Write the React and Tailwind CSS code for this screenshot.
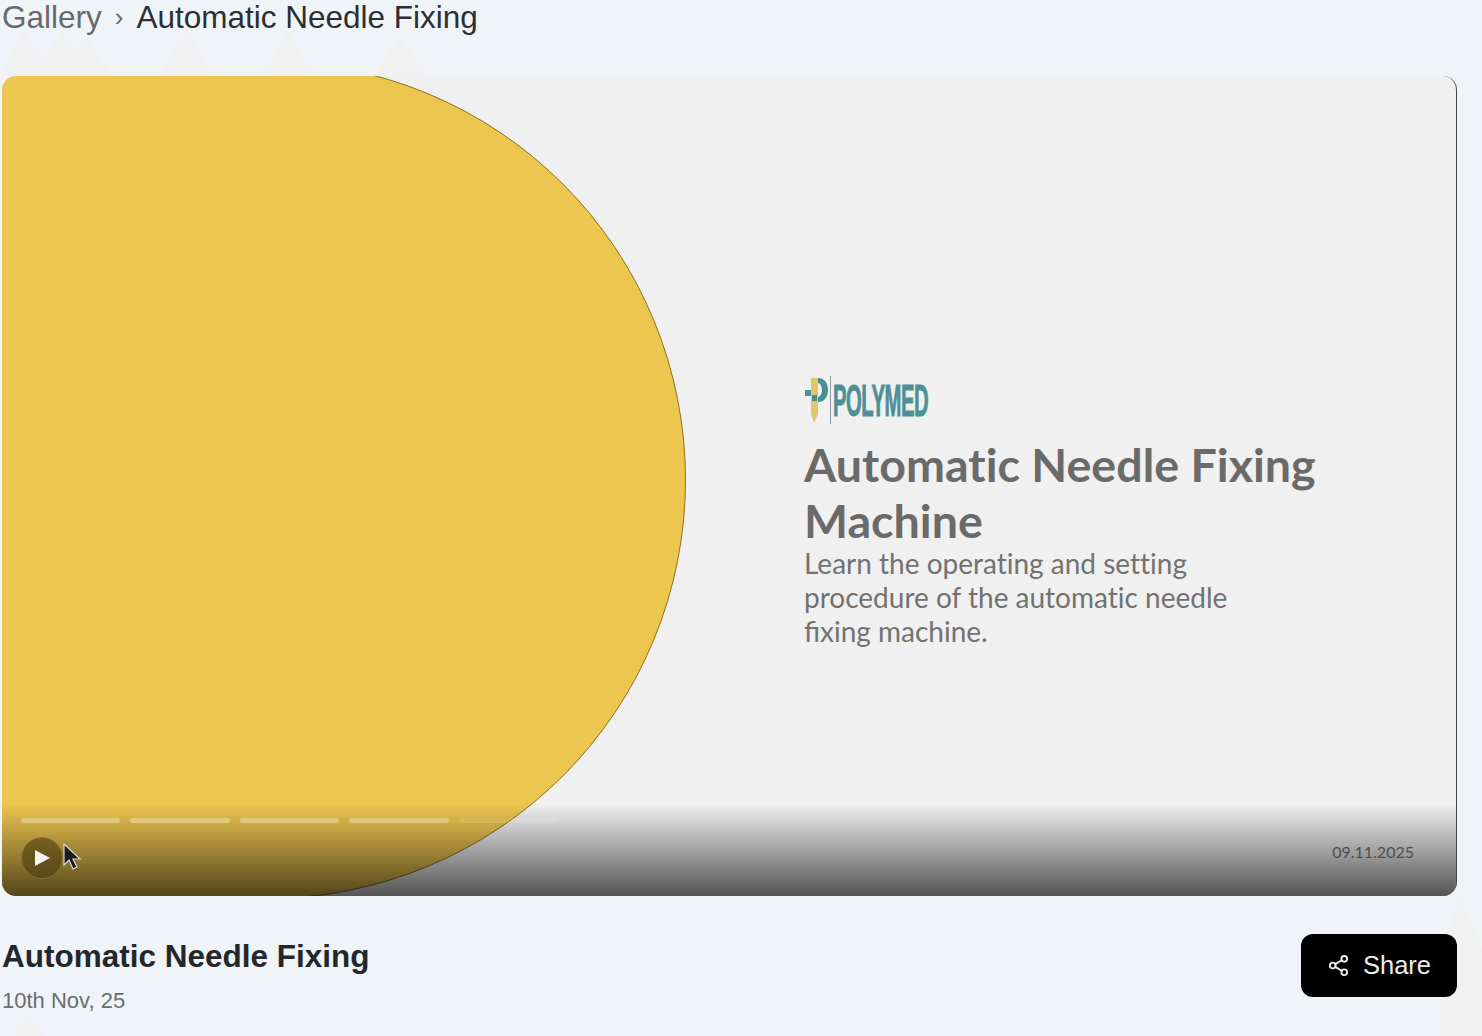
import React from 'react';
import { Share2 } from 'lucide-react';

const SEGMENTS = [1, 1, 1, 1, 0.35, 0.12, 0.12, 0.12, 0.12, 0.12, 0.12, 0.12, 0.12];
const PEAKS = [[25, 30], [62, 30], [85, 35], [187, 28], [288, 30], [400, 36]];

function Backdrop() {
  return (
    <svg className="absolute inset-0 pointer-events-none" width="1482" height="1036" fill="#f1f1f1">
      {PEAKS.map(([x, y]) => (
        <polygon key={x} points={`${x},${y} ${x + 27},76 ${x - 27},76`} />
      ))}
      <polygon points="1461,896 1482,950 1482,1036 1440,1036 1440,950" />
      <polygon points="30,1018 45,1036 15,1036" />
    </svg>
  );
}

function PolymedLogo() {
  return (
    <div className="flex items-center h-[50px]">
      <svg width="24" height="50" viewBox="0 0 24 50">
        <path d="M6 3h7v36l-4 9-3-9z" fill="#e3c56b" />
        <path d="M13 3c7 0 10 6 10 12s-3 12-10 12v-5c2 0 4-3 4-7s-2-7-4-7z" fill="#4a8e96" />
        <path d="M0 15h6v6H0z" fill="#4a8e96" />
        <path d="M7 20h5v6H7z" fill="#4a8e96" />
      </svg>
      <div className="w-px h-[48px] bg-[#8a9a9c] ml-[1px]" />
      <span className="ml-[2px] text-[45px] leading-none font-bold text-[#4f8f96] origin-left scale-x-[0.45] font-['Liberation_Sans',sans-serif] tracking-[-1px] [-webkit-text-stroke:1px_#4f8f96]">
        POLYMED
      </span>
    </div>
  );
}

function Cursor() {
  return (
    <svg className="absolute left-[60px] top-[767px]" width="20" height="28" viewBox="0 0 20 28">
      <path d="M2 1v21l5-5 4 9 4-2-4-8h7z" fill="#1b1b1b" stroke="#d8d8d8" strokeWidth="1.2" />
    </svg>
  );
}

export default function App() {
  return (
    <div className="relative h-[1036px] w-[1482px] overflow-hidden bg-[#f0f4f8] font-['Liberation_Sans',sans-serif]">
      <Backdrop />
      <div className="relative flex flex-col pl-[2px] pr-[25px]">
        {/* Breadcrumb */}
        <div className="h-[76px] flex items-start gap-[13px] text-[31.5px] leading-[34px] whitespace-nowrap">
          <span className="text-[#666a6e]">Gallery</span>
          <span className="text-[#666a6e] text-[26px]">›</span>
          <span className="text-[#2b2f33]">Automatic Needle Fixing</span>
        </div>

        {/* Video */}
        <div className="relative h-[820px] w-full overflow-hidden rounded-[14px] bg-[#f0f0f0] border-r border-[#444]">
          <div className="absolute left-[-154px] top-[-15px] w-[838px] h-[838px] rounded-full bg-[#edc64f] border-[1.5px] border-[#8a7020]" />
          <div className="absolute inset-y-0 left-0 w-[265px] bg-[#edc64f]" />

          <div className="absolute left-[802px] top-[297px] w-[560px] font-['Lato',sans-serif] text-[#6a6a6a] [font-variant-ligatures:no-common-ligatures]">
            <div className="ml-[1px] mt-[2px]">
              <PolymedLogo />
            </div>
            <h1 className="mt-[11px] text-[46.6px] leading-[56px] font-bold">Automatic Needle Fixing Machine</h1>
            <p className="mt-[-2px] w-[440px] text-[28px] leading-[34px] text-[#727272]">
              Learn the operating and setting procedure of the automatic needle{' '}
              <span className="[font-variant-ligatures:common-ligatures]">fi</span>xing machine.
            </p>
          </div>

          {/* Player controls */}
          <div className="absolute inset-x-0 bottom-0 h-[92px] bg-gradient-to-b from-black/0 to-black/65">
            <div className="flex gap-[10px] pl-[19px] pr-[22px] pt-[14px]">
              {SEGMENTS.map((o, i) => (
                <div key={i} className="h-[5px] flex-1 rounded-full bg-white" style={{ opacity: o * 0.3 }} />
              ))}
            </div>
            <div className="flex items-center justify-between pl-[19px] pr-[42px] mt-[14px]">
              <div className="flex h-[42px] w-[42px] items-center justify-center rounded-full bg-[#4a3a10]/60 border border-[#a08a3a]/60">
                <svg width="15" height="16" viewBox="0 0 15 16">
                  <path d="M0 0l15 8-15 8z" fill="#f4f4f4" />
                </svg>
              </div>
              <span className="mb-[12px] text-[16px] font-['Lato',sans-serif] text-[#4d4d4d]">09.11.2025</span>
            </div>
          </div>
          <Cursor />
        </div>

        {/* Footer */}
        <div className="flex items-start justify-between pt-[37px]">
          <div>
            <h2 className="text-[31.5px] leading-[46px] font-bold text-[#23272b]">Automatic Needle Fixing</h2>
            <p className="text-[22px] leading-[24px] text-[#6a6e72] mt-[10px]">10th Nov, 25</p>
          </div>
          <button className="mt-[1px] flex h-[63px] w-[156px] items-center justify-center gap-[13px] rounded-[12px] bg-black text-[25.5px] text-[#ececec]">
            <Share2 size={23} strokeWidth={2} />
            Share
          </button>
        </div>
      </div>
    </div>
  );
}
